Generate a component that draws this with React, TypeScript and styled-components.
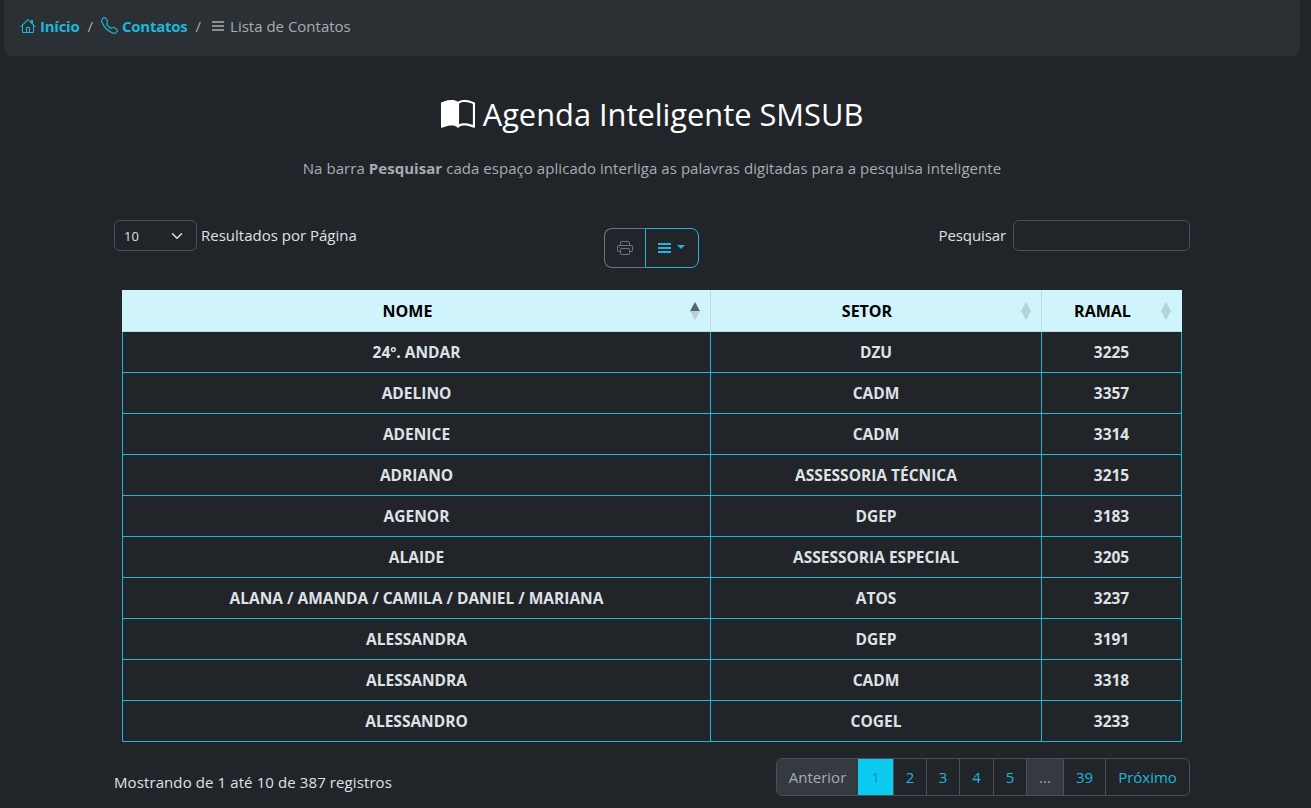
import React from "react";
import styled, { createGlobalStyle } from "styled-components";

const Global = createGlobalStyle`
  html, body { margin: 0; padding: 0; background: #212529; }
  body { font-family: "Open Sans", "Noto Sans", "Liberation Sans", sans-serif; font-size: 15px; color: #dee2e6; overflow: hidden; }
  * { box-sizing: border-box; }
`;

const Page = styled.div`
  width: 1311px;
  height: 808px;
  overflow: hidden;
  background: #212529;
`;

const Crumbs = styled.nav`
  margin: 0 11px 0 4px;
  height: 56px;
  padding: 0 16px 5px;
  background: #2b3035;
  border-radius: 0 0 8px 8px;
  display: flex;
  align-items: center;
`;

const CrumbLink = styled.a`
  display: inline-flex;
  align-items: center;
  gap: 4px;
  color: #1fb6dc;
  font-weight: 700;
  font-size: 15px;
  letter-spacing: -0.25px;
`;

const Slash = styled.span`
  color: #a7acb1;
  margin: 0 8px;
`;

const CrumbCurrent = styled.span`
  display: inline-flex;
  align-items: center;
  gap: 6px;
  margin-left: 3px;
  color: #a7acb1;
  font-size: 15px;
`;

const Main = styled.main`
  padding: 0 121px 0 114px;
`;

const Title = styled.h1`
  margin: 39px 0 0;
  height: 38px;
  display: flex;
  justify-content: center;
  align-items: center;
  gap: 8px;
  font-size: 30.8px;
  font-weight: 400;
  color: #fff;
  svg { margin-top: 2px; }
`;

const Subtitle = styled.p`
  margin: 24px 0 0;
  height: 22px;
  line-height: 22px;
  text-align: center;
  color: #a7acb1;
  font-size: 15px;
  letter-spacing: 0.05px;
  b { font-weight: 700; }
`;

const Controls = styled.div`
  margin-top: 41px;
  display: grid;
  grid-template-columns: 537px auto 1fr;
  height: 70px;
  align-items: start;
`;

const LengthGroup = styled.div`
  display: flex;
  align-items: center;
  gap: 4px;
  font-size: 15px;
`;

const ControlLabel = styled.span`
  margin-bottom: 2px;
`;

const SelectBox = styled.div`
  width: 83px;
  height: 31px;
  border: 1px solid #495057;
  border-radius: 6px;
  padding: 0 13px 0 9px;
  display: flex;
  align-items: center;
  justify-content: space-between;
  font-size: 13px;
`;

const ButtonGroup = styled.div`
  display: flex;
  margin-top: 8px;
  margin-left: -47px;
  height: 40px;
`;

const PrintButton = styled.div`
  width: 41px;
  border: 1px solid #6c757d;
  border-right: 0;
  border-radius: 8px 0 0 8px;
  display: flex;
  align-items: center;
  justify-content: center;
`;

const MenuButton = styled.div`
  width: 54px;
  border: 1px solid #1fb6dc;
  border-radius: 0 8px 8px 0;
  display: flex;
  align-items: center;
  justify-content: center;
  gap: 6px;
  padding-right: 2px;
`;

const Caret = styled.span`
  width: 0;
  height: 0;
  border-left: 4.5px solid transparent;
  border-right: 4.5px solid transparent;
  border-top: 4.5px solid #1fb6dc;
  margin-bottom: 3px;
`;

const SearchGroup = styled.label`
  display: flex;
  justify-content: flex-end;
  align-items: center;
  gap: 7px;
  font-size: 15px;
  letter-spacing: -0.1px;
`;

const SearchInput = styled.div`
  width: 177px;
  height: 31px;
  border: 1px solid #495057;
  border-radius: 6px;
`;

const TableWrap = styled.div`
  padding: 0 8px;
`;

const Table = styled.table`
  width: 1059px;
  table-layout: fixed;
  border-collapse: collapse;
`;

const Th = styled.th<{ $w: number }>`
  position: relative;
  width: ${(p) => p.$w}px;
  height: 41px;
  padding: 2px 26px 0 8px;
  background: #cff4fc;
  color: #000;
  font-size: 16px;
  font-weight: 700;
  text-align: center;
  border-left: 1px solid #badce3;
  border-bottom: 1px solid #badce3;
  &:first-child { border-left: 1px solid #cff4fc; }
  &:last-child { border-right: 1px solid #cff4fc; }
`;

const SortIcon = styled.svg`
  position: absolute;
  right: 10px;
  top: 12px;
`;

const Td = styled.td`
  height: 41px;
  padding: 0 8px;
  border: 1px solid #1fb6dc;
  text-align: center;
  color: #dee2e6;
  font-weight: 700;
  font-size: 15.5px;
`;

const Footer = styled.div`
  margin-top: 16px;
  display: flex;
  justify-content: space-between;
  align-items: flex-start;
`;

const Info = styled.div`
  margin-top: 14px;
  font-size: 15px;
  letter-spacing: 0.1px;
`;

const Pager = styled.ul`
  list-style: none;
  display: flex;
  height: 38px;
  margin: 0;
  padding: 0;
  border: 1px solid #495057;
  border-radius: 6px;
  overflow: hidden;
`;

const PageItem = styled.li<{ $w: number; $kind?: "active" | "disabled" }>`
  width: ${(p) => p.$w}px;
  display: flex;
  align-items: center;
  justify-content: center;
  font-size: 15px;
  border-left: ${(p) => (p.$kind === "active" ? "0" : "1px solid #495057")};
  color: ${(p) => (p.$kind === "disabled" ? "#a7acb1" : p.$kind === "active" ? "#0b8fe0" : "#1fb6dc")};
  background: ${(p) => (p.$kind === "disabled" ? "#343a40" : p.$kind === "active" ? "#0dcaf0" : "transparent")};
  &:first-child { border-left: 0; }
`;

const HouseIcon = () => (
  <svg width="16" height="16" viewBox="0 0 16 16" fill="#1fb6dc">
    <path d="M8.707 1.5a1 1 0 0 0-1.414 0L.646 8.146a.5.5 0 0 0 .708.708L2 8.207V13.5A1.5 1.5 0 0 0 3.5 15h9a1.5 1.5 0 0 0 1.5-1.5V8.207l.646.647a.5.5 0 0 0 .708-.708L13 5.793V2.5a.5.5 0 0 0-.5-.5h-1a.5.5 0 0 0-.5.5v1.293L8.707 1.5ZM13 7.207V13.5a.5.5 0 0 1-.5.5h-9a.5.5 0 0 1-.5-.5V7.207l5-5 5 5Z" />
    <path d="M6 14V9.5a.5.5 0 0 1 .5-.5h3a.5.5 0 0 1 .5.5V14H9V10H7v4H6Z" />
  </svg>
);

const PhoneIcon = () => (
  <svg width="17" height="17" viewBox="0 0 16 16" fill="#1fb6dc">
    <path d="M3.654 1.328a.678.678 0 0 0-1.015-.063L1.605 2.3c-.483.484-.661 1.169-.45 1.77a17.568 17.568 0 0 0 4.168 6.608 17.569 17.569 0 0 0 6.608 4.168c.601.211 1.286.033 1.77-.45l1.034-1.034a.678.678 0 0 0-.063-1.015l-2.307-1.794a.678.678 0 0 0-.58-.122l-2.19.547a1.745 1.745 0 0 1-1.657-.459L5.482 8.062a1.745 1.745 0 0 1-.46-1.657l.548-2.19a.678.678 0 0 0-.122-.58L3.654 1.328zM1.884.511a1.745 1.745 0 0 1 2.612.163L6.29 2.98c.329.423.445.974.315 1.494l-.547 2.19a.678.678 0 0 0 .178.643l2.457 2.457a.678.678 0 0 0 .644.178l2.189-.547a1.745 1.745 0 0 1 1.494.315l2.306 1.794c.829.645.905 1.87.163 2.611l-1.034 1.034c-.74.74-1.846 1.065-2.877.702a18.634 18.634 0 0 1-7.01-4.42 18.634 18.634 0 0 1-4.42-7.009c-.362-1.03-.037-2.137.703-2.877L1.885.511z" />
  </svg>
);

const ListIcon = ({ color, w = 13 }: { color: string; w?: number }) => (
  <svg width={w} height="12" viewBox="0 0 13 12" preserveAspectRatio="none" fill={color}>
    <rect x="0" y="1" width="13" height="2" />
    <rect x="0" y="5" width="13" height="2" />
    <rect x="0" y="9" width="13" height="2" />
  </svg>
);

const BookIcon = () => (
  <svg width="34" height="34" viewBox="0 0 16 16" fill="#fff">
    <path d="M8.5 2.687c.654-.689 1.782-.886 3.112-.752 1.234.124 2.503.523 3.388.893v9.923c-.918-.35-2.107-.692-3.287-.81-1.094-.111-2.278-.039-3.213.492V2.687zM8 1.783C7.015.936 5.587.81 4.287.94c-1.514.153-3.042.672-3.994 1.105A.5.5 0 0 0 0 2.5v11a.5.5 0 0 0 .707.455c.882-.4 2.303-.881 3.68-1.02 1.409-.142 2.59.087 3.223.877a.5.5 0 0 0 .78 0c.633-.79 1.814-1.019 3.222-.877 1.378.139 2.8.62 3.681 1.02A.5.5 0 0 0 16 13.5v-11a.5.5 0 0 0-.293-.455c-.952-.433-2.48-.952-3.994-1.105C10.413.809 8.985.936 8 1.783z" />
  </svg>
);

const PrinterIcon = () => (
  <svg width="16" height="16" viewBox="0 0 16 16" fill="#6c757d">
    <path d="M2.5 8a.5.5 0 1 0 0-1 .5.5 0 0 0 0 1z" />
    <path d="M5 1a2 2 0 0 0-2 2v2H2a2 2 0 0 0-2 2v3a2 2 0 0 0 2 2h1v1a2 2 0 0 0 2 2h6a2 2 0 0 0 2-2v-1h1a2 2 0 0 0 2-2V7a2 2 0 0 0-2-2h-1V3a2 2 0 0 0-2-2H5zM4 3a1 1 0 0 1 1-1h6a1 1 0 0 1 1 1v2H4V3zm1 5a2 2 0 0 0-2 2v1H2a1 1 0 0 1-1-1V7a1 1 0 0 1 1-1h12a1 1 0 0 1 1 1v3a1 1 0 0 1-1 1h-1v-1a2 2 0 0 0-2-2H5zm7 2v3a1 1 0 0 1-1 1H5a1 1 0 0 1-1-1v-3a1 1 0 0 1 1-1h6a1 1 0 0 1 1 1z" />
  </svg>
);

const Chevron = () => (
  <svg width="12" height="12" viewBox="0 0 16 16" fill="none" stroke="#dee2e6" strokeWidth="2" strokeLinecap="round" strokeLinejoin="round">
    <path d="m2 5 6 6 6-6" />
  </svg>
);

const Sort = ({ up }: { up?: boolean }) => (
  <SortIcon width="10" height="18" viewBox="0 0 10 18">
    <path d="M5 0 10 9H0Z" fill={up ? "#56666b" : "#b3d2d9"} />
    <path d="M5 18 0 9h10Z" fill="#b3d2d9" />
  </SortIcon>
);

const rows: [string, string, string][] = [
  ["24º. ANDAR", "DZU", "3225"],
  ["ADELINO", "CADM", "3357"],
  ["ADENICE", "CADM", "3314"],
  ["ADRIANO", "ASSESSORIA TÉCNICA", "3215"],
  ["AGENOR", "DGEP", "3183"],
  ["ALAIDE", "ASSESSORIA ESPECIAL", "3205"],
  ["ALANA / AMANDA / CAMILA / DANIEL / MARIANA", "ATOS", "3237"],
  ["ALESSANDRA", "DGEP", "3191"],
  ["ALESSANDRA", "CADM", "3318"],
  ["ALESSANDRO", "COGEL", "3233"],
];

const pages: { label: string; w: number; kind?: "active" | "disabled" }[] = [
  { label: "Anterior", w: 81, kind: "disabled" },
  { label: "1", w: 35, kind: "active" },
  { label: "2", w: 33 },
  { label: "3", w: 33 },
  { label: "4", w: 34 },
  { label: "5", w: 33 },
  { label: "...", w: 37, kind: "disabled" },
  { label: "39", w: 42 },
  { label: "Próximo", w: 84 },
];

export default function App() {
  return (
    <Page>
      <Global />
      <Crumbs>
        <CrumbLink><HouseIcon />Início</CrumbLink>
        <Slash>/</Slash>
        <CrumbLink><PhoneIcon />Contatos</CrumbLink>
        <Slash>/</Slash>
        <CrumbCurrent><ListIcon color="#8b9095" w={12} />Lista de Contatos</CrumbCurrent>
      </Crumbs>
      <Main>
        <Title><BookIcon />Agenda Inteligente SMSUB</Title>
        <Subtitle>Na barra <b>Pesquisar</b> cada espaço aplicado interliga as palavras digitadas para a pesquisa inteligente</Subtitle>
        <Controls>
          <LengthGroup>
            <SelectBox>10<Chevron /></SelectBox>
            <ControlLabel>Resultados por Página</ControlLabel>
          </LengthGroup>
          <ButtonGroup>
            <PrintButton><PrinterIcon /></PrintButton>
            <MenuButton><ListIcon color="#1fb6dc" /><Caret /></MenuButton>
          </ButtonGroup>
          <SearchGroup><ControlLabel>Pesquisar</ControlLabel><SearchInput /></SearchGroup>
        </Controls>
        <TableWrap>
          <Table>
            <thead>
              <tr>
                <Th $w={588}>NOME<Sort up /></Th>
                <Th $w={331}>SETOR<Sort /></Th>
                <Th $w={140}>RAMAL<Sort /></Th>
              </tr>
            </thead>
            <tbody>
              {rows.map((r, i) => (
                <tr key={i}>
                  <Td>{r[0]}</Td>
                  <Td>{r[1]}</Td>
                  <Td>{r[2]}</Td>
                </tr>
              ))}
            </tbody>
          </Table>
        </TableWrap>
        <Footer>
          <Info>Mostrando de 1 até 10 de 387 registros</Info>
          <Pager>
            {pages.map((p) => (
              <PageItem key={p.label} $w={p.w} $kind={p.kind}>{p.label}</PageItem>
            ))}
          </Pager>
        </Footer>
      </Main>
    </Page>
  );
}
